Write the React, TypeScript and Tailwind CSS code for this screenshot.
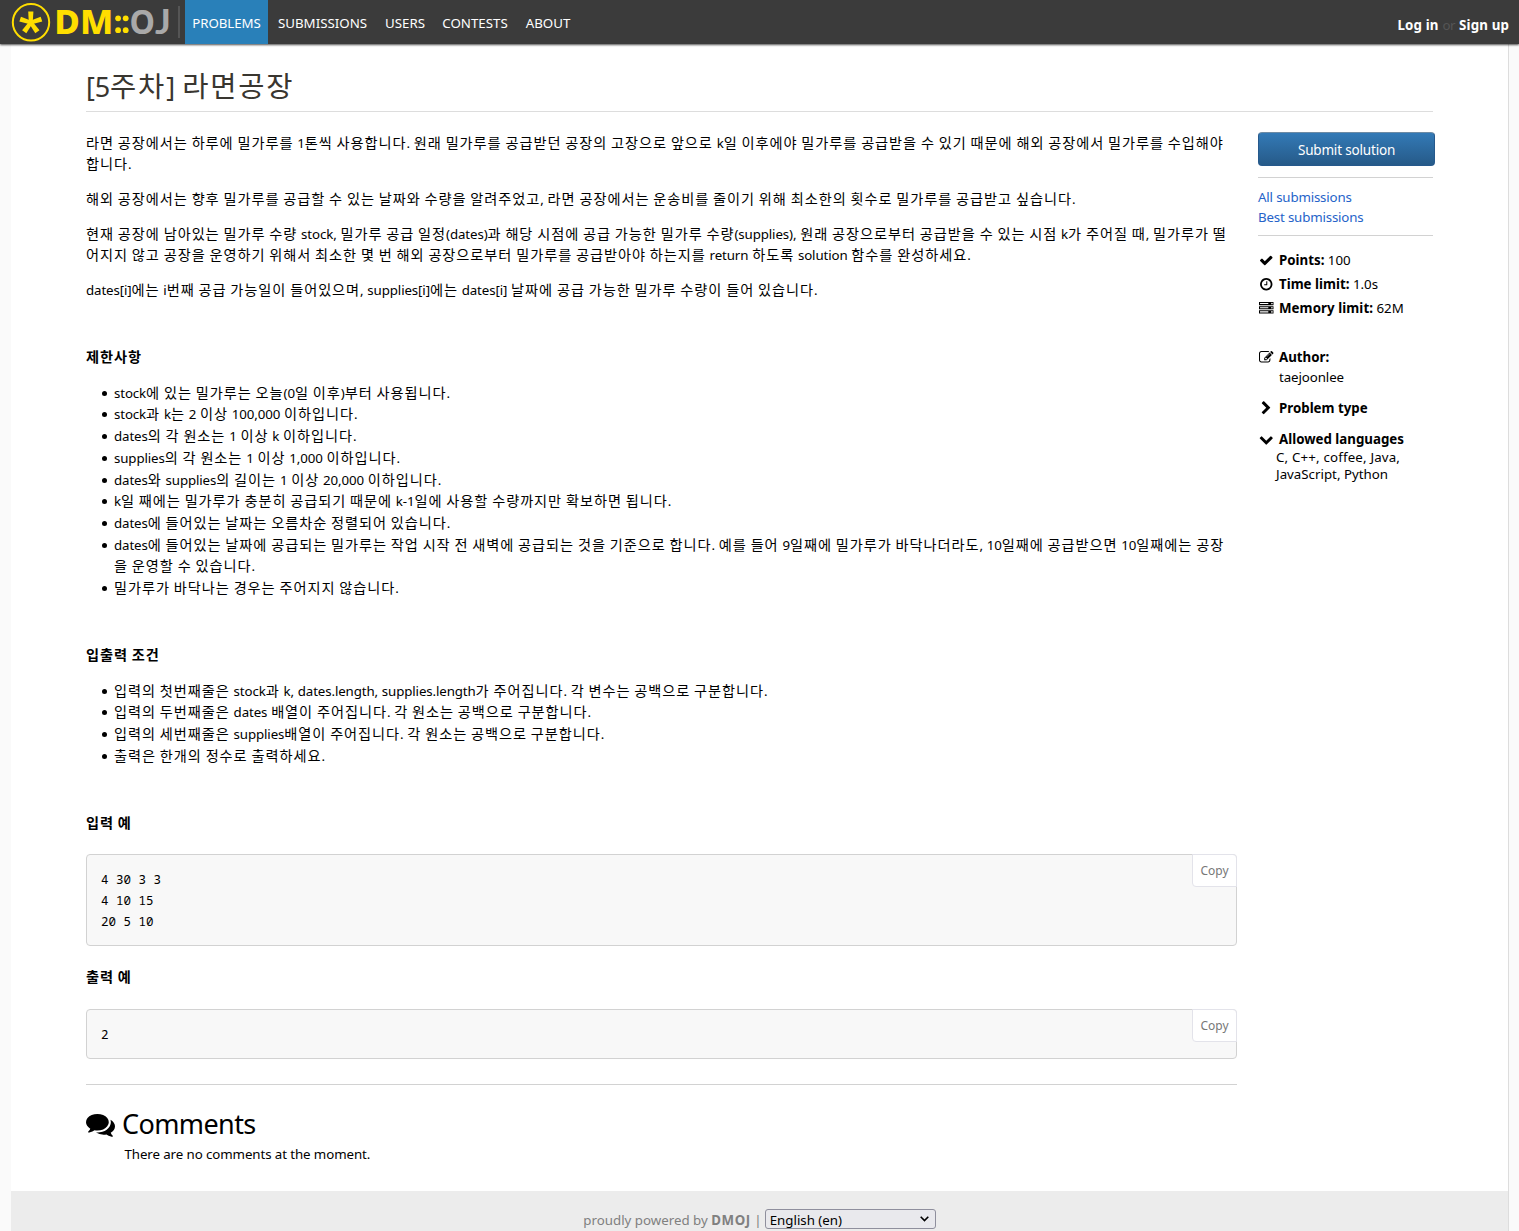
import { Fragment } from "react";
import type { ReactNode } from "react";

const HANGUL = /([\uAC00-\uD7A3]+)/;

/** Mixed Korean and Latin text: Korean runs get their own size and tracking. */
function Ko({ children, run = "text-[14.2px] tracking-[0.94px]" }: { children: string; run?: string }) {
  return (
    <span className="whitespace-pre tracking-[-0.12px] [word-spacing:0.48px]">
      {children.split(HANGUL).map((part, i) =>
        HANGUL.test(part) ? <span key={i} className={run}>{part}</span> : <Fragment key={i}>{part}</Fragment>,
      )}
    </span>
  );
}

const paragraphs: string[][] = [
  [
    "라면 공장에서는 하루에 밀가루를 1톤씩 사용합니다. 원래 밀가루를 공급받던 공장의 고장으로 앞으로 k일 이후에야 밀가루를 공급받을 수 있기 때문에 해외 공장에서 밀가루를 수입해야",
    "합니다.",
  ],
  ["해외 공장에서는 향후 밀가루를 공급할 수 있는 날짜와 수량을 알려주었고, 라면 공장에서는 운송비를 줄이기 위해 최소한의 횟수로 밀가루를 공급받고 싶습니다."],
  [
    "현재 공장에 남아있는 밀가루 수량 stock, 밀가루 공급 일정(dates)과 해당 시점에 공급 가능한 밀가루 수량(supplies), 원래 공장으로부터 공급받을 수 있는 시점 k가 주어질 때, 밀가루가 떨",
    "어지지 않고 공장을 운영하기 위해서 최소한 몇 번 해외 공장으로부터 밀가루를 공급받아야 하는지를 return 하도록 solution 함수를 완성하세요.",
  ],
  ["dates[i]에는 i번째 공급 가능일이 들어있으며, supplies[i]에는 dates[i] 날짜에 공급 가능한 밀가루 수량이 들어 있습니다."],
];

const limits: string[][] = [
  ["stock에 있는 밀가루는 오늘(0일 이후)부터 사용됩니다."],
  ["stock과 k는 2 이상 100,000 이하입니다."],
  ["dates의 각 원소는 1 이상 k 이하입니다."],
  ["supplies의 각 원소는 1 이상 1,000 이하입니다."],
  ["dates와 supplies의 길이는 1 이상 20,000 이하입니다."],
  ["k일 째에는 밀가루가 충분히 공급되기 때문에 k-1일에 사용할 수량까지만 확보하면 됩니다."],
  ["dates에 들어있는 날짜는 오름차순 정렬되어 있습니다."],
  [
    "dates에 들어있는 날짜에 공급되는 밀가루는 작업 시작 전 새벽에 공급되는 것을 기준으로 합니다. 예를 들어 9일째에 밀가루가 바닥나더라도, 10일째에 공급받으면 10일째에는 공장",
    "을 운영할 수 있습니다.",
  ],
  ["밀가루가 바닥나는 경우는 주어지지 않습니다."],
];

const io: string[][] = [
  ["입력의 첫번째줄은 stock과 k, dates.length, supplies.length가 주어집니다. 각 변수는 공백으로 구분합니다."],
  ["입력의 두번째줄은 dates 배열이 주어집니다. 각 원소는 공백으로 구분합니다."],
  ["입력의 세번째줄은 supplies배열이 주어집니다. 각 원소는 공백으로 구분합니다."],
  ["출력은 한개의 정수로 출력하세요."],
];

function Bullets({ items }: { items: string[][] }) {
  return (
    <ul className="-mb-[0.8px] pl-7 pt-[0.8px]">
      {items.map((lines, i) => (
        <li key={i} className="relative">
          <span className="absolute -left-[12px] top-[9px] size-[5px] rounded-full bg-black" />
          {lines.map((t) => (
            <div key={t} className="h-[21.7px] leading-[21.7px]"><Ko>{t}</Ko></div>
          ))}
        </li>
      ))}
    </ul>
  );
}

function CodeBlock({ children, className }: { children: string; className: string }) {
  return (
    <div className={`relative rounded-[4px] border border-[#d2d2d2] bg-[#f8f8f8] px-[14px] pt-[14px] ${className}`}>
      <pre className="font-['Noto_Sans_Mono','DejaVu_Sans_Mono',monospace] text-[12.5px] leading-[21px]">{children}</pre>
      <span className="absolute -right-px -top-px flex h-[33px] w-[45px] items-center justify-center rounded-bl-[4px] rounded-tr-[4px] border border-[#e3e3ea] bg-white pt-[2px] text-[12px] text-[#777]">
        Copy
      </span>
    </div>
  );
}

function Heading({ children, className }: { children: string; className: string }) {
  return <h4 className={`h-[21px] font-bold leading-[21px] ${className}`}><Ko>{children}</Ko></h4>;
}

function Logo() {
  return (
    <svg width="172" height="44" viewBox="0 0 172 44" className="overflow-visible">
      <circle cx="31" cy="22.3" r="18.2" fill="none" stroke="#ffde00" strokeWidth="2" />
      <g fill="#ffde00" transform="translate(30.8 22.6)">
        {["rotate(0)", "rotate(72)", "rotate(144)", "rotate(216)", "rotate(288)"].map((r) => (
          <path key={r} transform={r} d="M-1.9 0.6L-2.6-11.2H2.6L1.9 0.6Z" />
        ))}
      </g>
      <text x="54.3" y="33.8" fontFamily="Noto Sans" fontWeight="800" fontSize="33.5" fill="#ffde00" textLength="59" lengthAdjust="spacingAndGlyphs">DM</text>
      <g fill="#ffde00">
        <circle cx="118.1" cy="18.3" r="2.9" /><circle cx="125.7" cy="18.3" r="2.9" />
        <circle cx="118.1" cy="30.2" r="2.9" /><circle cx="125.7" cy="30.2" r="2.9" />
      </g>
      <text x="129.5" y="33.8" fontFamily="Noto Sans" fontWeight="700" fontSize="33.5" fill="#a9a9a9" textLength="25.500" lengthAdjust="spacingAndGlyphs">O</text>
      <text x="155" y="33.8" fontFamily="Lato" fontWeight="700" fontSize="33.5" fill="#a9a9a9" textLength="16" lengthAdjust="spacingAndGlyphs">J</text>
    </svg>
  );
}

function NavItem({ children, active, className }: { children: string; active?: boolean; className: string }) {
  return (
    <a className={`flex h-11 items-center justify-center pt-[3px] text-[13.3px] text-white ${active ? "bg-[#2980b9]" : ""} ${className}`}>
      {children}
    </a>
  );
}

const icons = {
  check: "M1671 566q0 40-28 68l-724 724-136 136q-28 28-68 28t-68-28l-136-136-362-362q-28-28-28-68t28-68l136-136q28-28 68-28t68 28l294 295 656-657q28-28 68-28t68 28l136 136q28 28 28 68z",
  clock: "M1024 544v448q0 14-9 23t-23 9h-320q-14 0-23-9t-9-23v-64q0-14 9-23t23-9h224v-352q0-14 9-23t23-9h64q14 0 23 9t9 23zm416 352q0-148-73-273t-198-198-273-73-273 73-198 198-73 273 73 273 198 198 273 73 273-73 198-198 73-273zm224 0q0 209-103 385.500t-279.500 279.500-385.500 103-385.500-103-279.500-279.500-103-385.500 103-385.500 279.500-279.500 385.500-103 385.500 103 279.500 279.500 103 385.500z",
  right: "M1363 877l-742 742q-19 19-45 19t-45-19l-166-166q-19-19-19-45t19-45l531-531-531-531q-19-19-19-45t19-45l166-166q19-19 45-19t45 19l742 742q19 19 19 45t-19 45z",
  down: "M1683 808l-742 741q-19 19-45 19t-45-19l-742-741q-19-19-19-45.500t19-45.500l166-165q19-19 45-19t45 19l531 531 531-531q19-19 45-19t45 19l166 165q19 19 19 45.500t-19 45.500z",
  edit: "M888 1184l116-116-152-152-116 116v56h96v96h56zm440-720q-16-16-33 1l-350 350q-17 17-1 33t33-1l350-350q17-17 1-33zm80 594v190q0 119-84.500 203.500t-203.500 84.500h-832q-119 0-203.500-84.500t-84.500-203.500v-832q0-119 84.500-203.500t203.500-84.500h832q63 0 117 25 15 7 18 23 3 17-9 29l-49 49q-14 14-32 8-23-6-45-6h-832q-66 0-113 47t-47 113v832q0 66 47 113t113 47h832q66 0 113-47t47-113v-126q0-13 9-22l64-64q15-15 35-7t20 29zm-96-738l288 288-672 672h-288v-288zm444 132l-92 92-288-288 92-92q28-28 68-28t68 28l152 152q28 28 28 68t-28 68z",
  server: "M128 1408h1024v-128h-1024v128zm0-512h1024v-128h-1024v128zm1568 448q0-40-28-68t-68-28-68 28-28 68 28 68 68 28 68-28 28-68zm-1568-960h1024v-128h-1024v128zm1568 448q0-40-28-68t-68-28-68 28-28 68 28 68 68 28 68-28 28-68zm0-512q0-40-28-68t-68-28-68 28-28 68 28 68 68 28 68-28 28-68zm96 832v384h-1792v-384h1792zm0-512v384h-1792v-384h1792zm0-512v384h-1792v-384h1792z",
};

function Row({ icon, children, className }: { icon: keyof typeof icons; children: ReactNode; className?: string }) {
  return (
    <div className={`flex items-center whitespace-nowrap ${className ?? ""}`}>
      <span className="flex w-[21px] shrink-0 pl-px">
        <svg width="14.5" height="14.5" viewBox="0 0 1792 1792" fill="currentColor"><path d={icons[icon]} /></svg>
      </span>
      {children}
    </div>
  );
}

export default function App() {
  return (
    <div className="h-[1231px] overflow-hidden bg-[#fafafa] font-['Noto_Sans','Noto_Sans_CJK_KR',sans-serif] text-[13.3px] text-black">
      <nav className="relative z-10 flex h-11 bg-[#3b3b3b] shadow-[0_1px_2px_#000000b0]">
        <Logo />
        <span className="ml-[6px] mr-1 mt-[6px] h-8 w-[2px] bg-[#555]" />
        <div className="flex pl-px">
          <NavItem active className="w-[83px] tracking-[-0.1px]">PROBLEMS</NavItem>
          <NavItem className="w-[109px]">SUBMISSIONS</NavItem>
          <NavItem className="w-[56px]">USERS</NavItem>
          <NavItem className="w-[84px]">CONTESTS</NavItem>
          <NavItem className="w-[62px]">ABOUT</NavItem>
        </div>
        <div className="ml-auto flex items-center gap-1 pr-[10px] pt-2 font-bold tracking-[0.15px] text-white">
          <span>Log in</span><span className="font-normal tracking-[-0.5px] text-[#555]">or</span><span>Sign up</span>
        </div>
      </nav>
      <main className="ml-[11px] h-[1187px] w-[1498px] border-r border-[#ddd] bg-white">
        <div className="h-[1147px] px-[75px] pt-[23px]">
          <h2 className="h-[45px] w-[1347px] border-b border-[#ddd] text-[27px] leading-[38px] text-[#393630]">
            <Ko run="text-[28.5px] tracking-[1.8px]">[5주차] 라면공장</Ko>
          </h2>
          <div className="flex gap-[21px]">
            <article className="w-[1151px] shrink-0 pt-5">
              {paragraphs.map((lines, i) => (
                <p key={i} className="mb-[14px]">
                  {lines.map((t) => <span key={t} className="block h-[21px] leading-[21px]"><Ko>{t}</Ko></span>)}
                </p>
              ))}
              <Heading className="mt-[46px] mb-[14px]">제한사항</Heading>
              <Bullets items={limits} />
              <Heading className="mt-[46px] mb-[14px]">입출력 조건</Heading>
              <Bullets items={io} />
              <Heading className="mt-[46px] mb-[21px]">입력 예</Heading>
              <CodeBlock className="h-[92px]">{"4 30 3 3\n4 10 15\n20 5 10"}</CodeBlock>
              <Heading className="mt-5 mb-[22px]">출력 예</Heading>
              <CodeBlock className="h-[50px]">2</CodeBlock>
              <hr className="mt-[25px] border-[#d2d2d2]" />
              <h2 className="mt-5 flex h-10 items-center gap-[7px] text-[27px]">
                <svg width="29" height="24.9" viewBox="0 0 1792 1536" fill="currentColor"><path d="M1408 640q0 139-94 257t-256.500 186.500-353.500 68.500q-86 0-176-16-124 88-278 128-36 9-86 16h-3q-11 0-20.500-8t-11.500-21q-1-3-1-6.500t.5-6.500 2-6l2.500-5 3.500-5.500 4-5 4.500-5 4-4.500q5-6 23-25t26-29.500 22.500-29 25-38.500 20.500-44q-124-72-195-177t-71-224q0-139 94-257t256.500-186.500 353.500-68.500 353.500 68.500 256.500 186.500 94 257zm384 256q0 120-71 224.500t-195 176.500q10 24 20.500 44t25 38.500 22.500 29 26 29.500 23 25q1 1 4 4.500t4.500 5 4 5 3.500 5.500l2.500 5 2 6 .5 6.500-1 6.500q-3 14-13 22t-22 7q-50-7-86-16-154-40-278-128-90 16-176 16-271 0-472-132 58 4 88 4 161 0 309-45t264-129q125-92 192-212t67-254q0-77-23-152 129 71 204 178t75 230z" transform="translate(0 -10)" /></svg>
                <span className="tracking-[-0.6px]">Comments</span>
              </h2>
              <p className="pl-[38.5px] tracking-[-0.09px]">There are no comments at the moment.</p>
            </article>
            <aside className="w-[177px] shrink-0 pt-[20px]">
              <button className="flex h-[34px] w-[177px] items-center justify-center rounded-[4px] border border-[#26598c] border-t-[#6d8ba5] bg-linear-to-b from-[#337ab7] to-[#265a88] pt-[3px] text-[13.5px] tracking-[-0.18px] text-white">Submit solution</button>
              <div className="mt-[11px] h-[59px] w-[175px] border-y border-[#d2d2d2] pt-[9px] leading-5 tracking-[-0.17px] text-[#2563c9]">
                <div>All submissions</div><div>Best submissions</div>
              </div>
              <div className="mt-3 leading-6">
                <Row icon="check"><b>Points:</b>&nbsp;<span>100</span></Row>
                <Row icon="clock"><b>Time limit:</b>&nbsp;<span>1.0s</span></Row>
                <Row icon="server"><b className="tracking-[0.07px]">Memory limit:</b>&nbsp;<span>62M</span></Row>
              </div>
              <div className="mt-[27px] leading-5">
                <Row icon="edit"><b>Author:</b></Row>
                <div className="pl-[21px] tracking-[-0.1px]">taejoonlee</div>
                <Row className="mt-[11px]" icon="right"><b>Problem type</b></Row>
                <Row className="mt-[11px]" icon="down"><b>Allowed languages</b></Row>
                <div className="pl-[18px] leading-[17px]"><div className="tracking-[0.17px]">C, C++, coffee, Java,</div><div>JavaScript, Python</div></div>
              </div>
            </aside>
          </div>
        </div>
        <footer className="flex h-10 items-center justify-center bg-[#ececec] pt-4 text-[#808080]">
          <span className="flex pt-[3px]">
            <span>proudly powered by</span>&nbsp;<b className="tracking-[0.6px]">DMOJ</b>&nbsp;|<span className="w-[2px]" />
          </span>
          <span className="ml-px flex h-5 w-[171px] items-center justify-between overflow-hidden rounded-[3px] border border-[#8f8f9d] bg-[#e9e9ed] px-1 pr-[6px] text-black">
            <span className="pt-[3px]">English (en)</span>
            <svg width="9" height="6" viewBox="0 0 9 6" fill="none" stroke="currentColor" strokeWidth="1.6"><path d="M0.7 0.8L4.5 4.600L8.300 0.8" /></svg>
          </span>
        </footer>
      </main>
    </div>
  );
}
